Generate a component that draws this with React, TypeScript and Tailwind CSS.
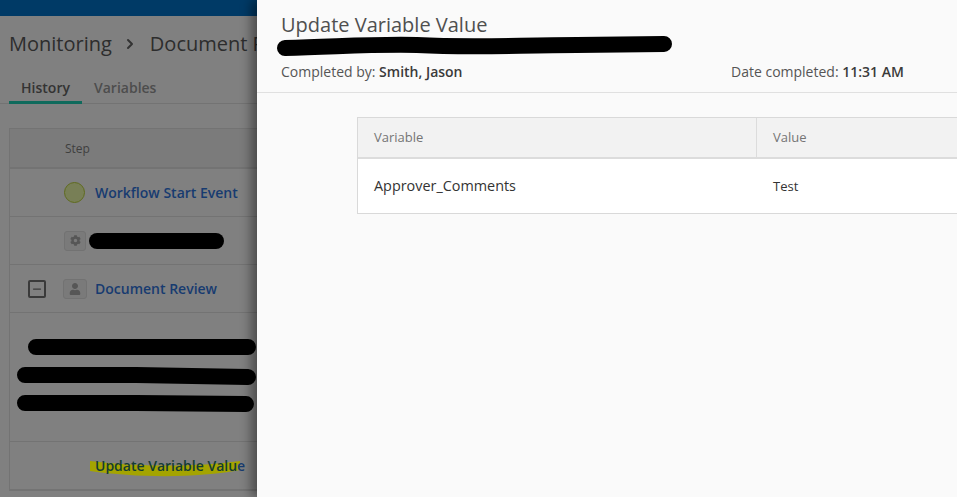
import { ChevronRight, Minus } from "lucide-react"
import { FaCog, FaUser } from "react-icons/fa"

// black marker strokes used to hide text in the screenshot
const Scribble = ({ className, d, w, h, sw }: { className: string; d: string; w: number; h: number; sw: number }) => (
    <svg className={className} width={w} height={h} viewBox={`0 0 ${w} ${h}`} fill="none">
        <path d={d} stroke="#000" strokeWidth={sw} strokeLinecap="round" strokeLinejoin="round" />
    </svg>
)

const Row = ({ className, children }: { className: string; children?: React.ReactNode }) => (
    <div className={`relative flex items-center border-b border-[#737373] ${className}`}>{children}</div>
)

export default function App() {
    return (
        <div className="relative w-[957px] h-[497px] overflow-hidden bg-[#808080] font-['Open_Sans',sans-serif]">
            <div className="h-4 bg-[#003a66]" />
            <div className="w-[257px] overflow-hidden">
                <h1 className="flex items-center w-[300px] h-[30px] mt-[13px] pl-[9px] text-[20px] leading-[28px] text-[#2d2d2d] whitespace-nowrap">
                    Monitoring
                    <ChevronRight size={16} strokeWidth={3} className="shrink-0 ml-[10px] mr-[12px] text-[#333]" />
                    Document Review
                </h1>
            </div>
            <div className="flex h-[45px] pl-[9px] border-b border-[#737373] w-[257px] text-[14px] font-semibold">
                <div className="w-[73px] h-[45px] pt-[19px] text-center leading-[20px] text-[#333] border-b-[3px] border-[#0f6a5c]">History</div>
                <div className="ml-[12px] pt-[19px] leading-[20px] text-[#4d4d4d]">Variables</div>
            </div>
            <div className="ml-[9px] mt-[24px] w-[260px] h-[363px] border border-[#737373] border-b-2 text-[14px] font-semibold">
                <Row className="h-[40px] bg-[#7b7b7b] border-b-2 pl-[55px] pt-[2px] text-[12px] font-normal text-[#3f3f3f]">Step</Row>
                <Row className="h-[48px]">
                    <div className="ml-[54px] w-[21px] h-[21px] rounded-full bg-[#787f56] border border-[#5f6b1e]" />
                    <span className="ml-[10px] text-[#173b70] whitespace-nowrap">Workflow Start Event</span>
                </Row>
                <Row className="h-[48px]">
                    <div className="ml-[54px] w-[22px] h-[20px] flex items-center justify-center rounded-[3px] bg-[#7a7a7a] border border-[#727272]">
                        <FaCog size={11} className="text-[#565656]" />
                    </div>
                    <Scribble className="absolute left-[79px] top-[14px]" w={136} h={19} sw={16} d="M8 10 H127" />
                </Row>
                <Row className="h-[48px]">
                    <div className="ml-[18px] w-[18px] h-[18px] flex items-center justify-center rounded-[2px] border-2 border-[#3a3a3a]">
                        <Minus size={12} strokeWidth={2.5} className="text-[#3a3a3a]" />
                    </div>
                    <div className="ml-[17px] w-[24px] h-[20px] flex items-center justify-center rounded-[3px] bg-[#7a7a7a] border border-[#727272]">
                        <FaUser size={12} className="text-[#565656]" />
                    </div>
                    <span className="ml-[8px] text-[#173b70] whitespace-nowrap">Document Review</span>
                </Row>
                <Row className="h-[129px]">
                    <Scribble className="absolute left-[6px] top-[20px]" w={240} h={86} sw={16} d="M20 14 H232 M9 42 H120 L232 44 M9 70 H120 L230 71" />
                </Row>
                <div className="relative flex items-center h-[47px]">
                    <svg className="absolute left-[78px] top-[17px]" width={156} height={20} viewBox="0 0 156 20" fill="none">
                        <path d="M2 2 L2 12 C50 19 110 19 152 11 L152 2 C110 8 50 8 2 2 Z" fill="#a4a400" />
                    </svg>
                    <span className="relative ml-[85px] text-[#143c33] whitespace-nowrap">
                        Update Variable Valu<span className="text-[#173b70]">e</span>
                    </span>
                </div>
            </div>

            {/* slide-over panel */}
            <div className="absolute left-[257px] top-0 w-[700px] h-[497px] bg-[#fafafa] shadow-[-6px_0_10px_rgba(0,0,0,0.4)]">
                <div className="relative h-[93px] px-6 pt-[11px] border-b border-[#e0e0e0]">
                    <h2 className="text-[20px] leading-[28px] text-[#4f4f4f]">Update Variable Value</h2>
                    <Scribble className="absolute left-[20px] top-[36px]" w={396} h={22} sw={16} d="M8 12 C60 11 90 8 140 9 C200 12 240 9 300 9 L387 8" />
                    <div className="flex mt-[23px] text-[14px] leading-5 text-[#555]">
                        <span className="w-[450px]">Completed by: <span className="font-semibold text-[#3a3a3a]">Smith, Jason</span></span>
                        <span>Date completed: <span className="font-semibold text-[#3a3a3a]">11:31 AM</span></span>
                    </div>
                </div>
                <div className="ml-[100px] mt-[24px] w-[600px] border border-r-0 border-[#d9d9d9]">
                    <div className="flex h-[41px] items-center bg-[#f2f2f2] border-b-2 border-[#dcdcdc] text-[13px] text-[#757575]">
                        <div className="w-[399px] h-full flex items-center pl-4 border-r border-[#dcdcdc]">Variable</div>
                        <div className="pl-4">Value</div>
                    </div>
                    <div className="flex h-[54px] items-center bg-white text-[#333]">
                        <div className="w-[399px] pl-4 text-[14.4px] leading-5 font-medium pb-[1px]">Approver_Comments</div>
                        <div className="pl-4 text-[13px] leading-5">Test</div>
                    </div>
                </div>
            </div>
        </div>
    )
}
